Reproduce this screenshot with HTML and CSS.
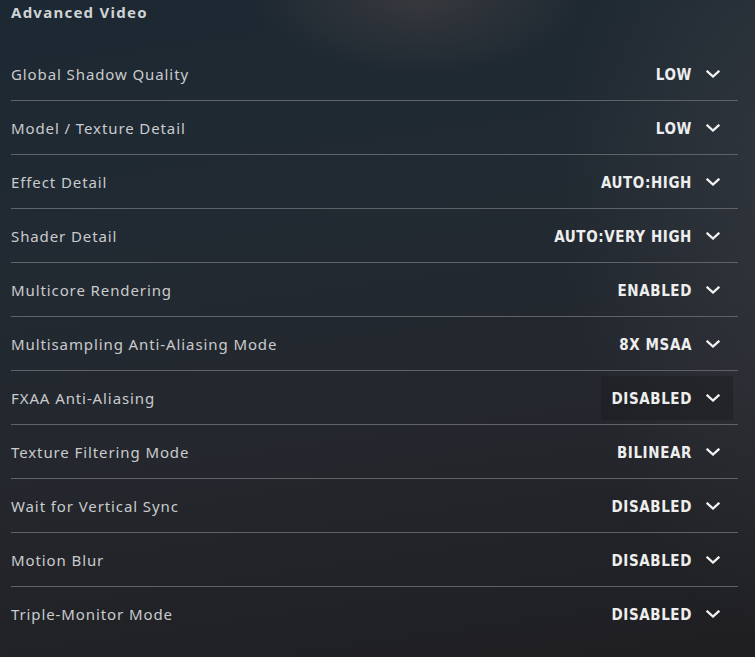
FILE: index.html
```html
<!DOCTYPE html>
<html>
<head>
<meta charset="utf-8">
<link rel="stylesheet" href="styles.css">
</head>
<body>
<div class="panel">
  <h1 class="title">Advanced Video</h1>
  <div class="list">
    <div class="row"><span class="label">Global Shadow Quality</span><span class="select"><span class="value">LOW</span><svg class="chev" viewBox="0 0 14 8"><path d="M1.5 1.5 L7 6.5 L12.5 1.5"/></svg></span></div>
    <div class="row"><span class="label">Model / Texture Detail</span><span class="select"><span class="value">LOW</span><svg class="chev" viewBox="0 0 14 8"><path d="M1.5 1.5 L7 6.5 L12.5 1.5"/></svg></span></div>
    <div class="row"><span class="label">Effect Detail</span><span class="select"><span class="value">AUTO:HIGH</span><svg class="chev" viewBox="0 0 14 8"><path d="M1.5 1.5 L7 6.5 L12.5 1.5"/></svg></span></div>
    <div class="row"><span class="label">Shader Detail</span><span class="select"><span class="value">AUTO:VERY HIGH</span><svg class="chev" viewBox="0 0 14 8"><path d="M1.5 1.5 L7 6.5 L12.5 1.5"/></svg></span></div>
    <div class="row"><span class="label">Multicore Rendering</span><span class="select"><span class="value">ENABLED</span><svg class="chev" viewBox="0 0 14 8"><path d="M1.5 1.5 L7 6.5 L12.5 1.5"/></svg></span></div>
    <div class="row"><span class="label">Multisampling Anti-Aliasing Mode</span><span class="select"><span class="value">8X MSAA</span><svg class="chev" viewBox="0 0 14 8"><path d="M1.5 1.5 L7 6.5 L12.5 1.5"/></svg></span></div>
    <div class="row"><span class="label">FXAA Anti-Aliasing</span><span class="select hover"><span class="value">DISABLED</span><svg class="chev" viewBox="0 0 14 8"><path d="M1.5 1.5 L7 6.5 L12.5 1.5"/></svg></span></div>
    <div class="row"><span class="label">Texture Filtering Mode</span><span class="select"><span class="value">BILINEAR</span><svg class="chev" viewBox="0 0 14 8"><path d="M1.5 1.5 L7 6.5 L12.5 1.5"/></svg></span></div>
    <div class="row"><span class="label">Wait for Vertical Sync</span><span class="select"><span class="value">DISABLED</span><svg class="chev" viewBox="0 0 14 8"><path d="M1.5 1.5 L7 6.5 L12.5 1.5"/></svg></span></div>
    <div class="row"><span class="label">Motion Blur</span><span class="select"><span class="value">DISABLED</span><svg class="chev" viewBox="0 0 14 8"><path d="M1.5 1.5 L7 6.5 L12.5 1.5"/></svg></span></div>
    <div class="row last"><span class="label">Triple-Monitor Mode</span><span class="select"><span class="value">DISABLED</span><svg class="chev" viewBox="0 0 14 8"><path d="M1.5 1.5 L7 6.5 L12.5 1.5"/></svg></span></div>
  </div>
</div>
</body>
</html>
```
FILE: styles.css
```css
html, body {
  margin: 0;
  padding: 0;
  height: 100%;
}
body {
  width: 755px;
  height: 657px;
  overflow: hidden;
  background:
    radial-gradient(ellipse 170px 80px at 420px -5px, rgba(78, 70, 70, 0.55), rgba(60, 58, 62, 0) 100%),
    radial-gradient(ellipse 240px 460px at 800px 180px, rgba(64, 66, 72, 0.5), rgba(60, 62, 68, 0) 100%),
    linear-gradient(172deg, #1c2832 0%, #212a33 30%, #24272d 62%, #1f1f22 100%);
  font-family: "Noto Sans", "Open Sans", sans-serif;
}
.panel {
  padding: 0 17px 0 11px;
}
.title {
  margin: 0;
  height: 26px;
  padding-top: 2px;
  font-size: 15px;
  font-weight: 700;
  letter-spacing: 1.25px;
  color: #d0d3d6;
  line-height: 20px;
}
.list {
  display: flex;
  flex-direction: column;
  padding-top: 19px;
}
.row {
  display: flex;
  align-items: center;
  justify-content: space-between;
  height: 53px;
  border-bottom: 1px solid #5f6266;
}
.row.last {
  border-bottom: none;
}
.label {
  font-size: 15px;
  letter-spacing: 0.9px;
  color: #c9cbcd;
}
.select {
  display: flex;
  align-items: center;
  gap: 14px;
  height: 44px;
  padding: 0 13px 0 0;
  margin-right: 5px;
  border-radius: 2px;
}
.select.hover {
  background: rgba(22, 23, 26, 0.35);
  padding-left: 11px;
}
.value {
  font-family: "DejaVu Sans Condensed", "DejaVu Sans", sans-serif;
  font-weight: 700;
  font-size: 15px;
  letter-spacing: 0.6px;
  color: #eeeeee;
  padding-top: 3px;
}
.chev {
  width: 14px;
  height: 8px;
  fill: none;
  stroke: #f2f2f2;
  stroke-width: 2.3;
  stroke-linecap: square;
}
```
